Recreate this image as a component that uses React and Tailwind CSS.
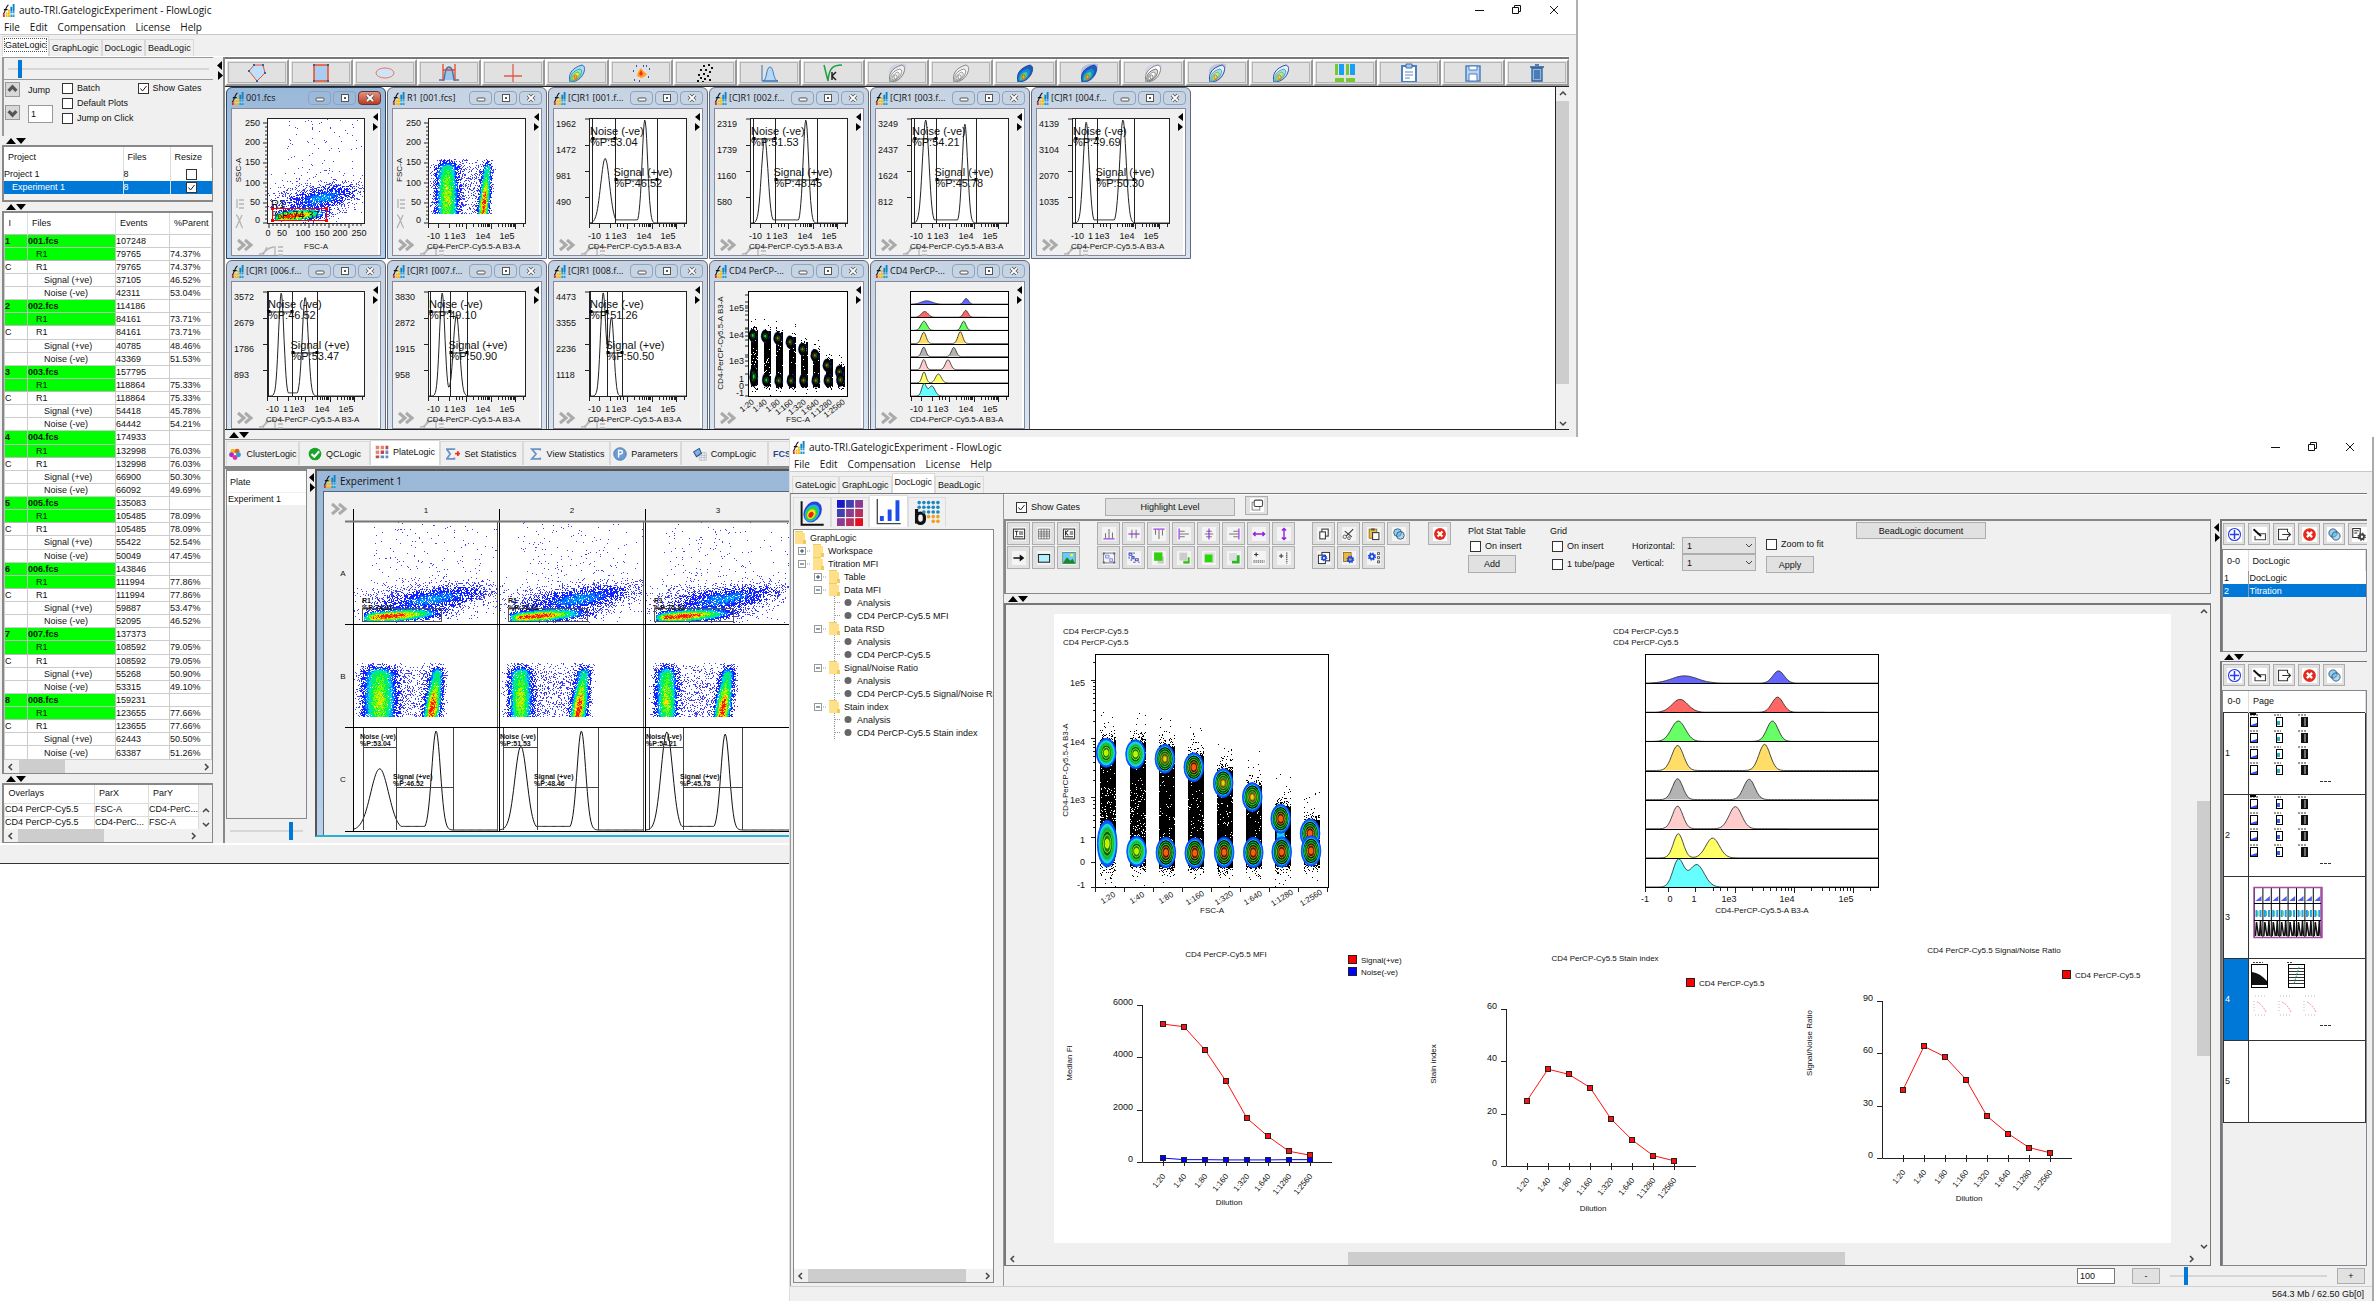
import React, { useState } from 'react';

// ---------------------------------------------------------------- data

const FILES = [
  { n: 1, name: '001.fcs', total: 107248, r1: 79765, pct: '74.37%', sig: [37105, '46.52%'], noise: [42311, '53.04%'] },
  { n: 2, name: '002.fcs', total: 114186, r1: 84161, pct: '73.71%', sig: [40785, '48.46%'], noise: [43369, '51.53%'] },
  { n: 3, name: '003.fcs', total: 157795, r1: 118864, pct: '75.33%', sig: [54418, '45.78%'], noise: [64442, '54.21%'] },
  { n: 4, name: '004.fcs', total: 174933, r1: 132998, pct: '76.03%', sig: [66900, '50.30%'], noise: [66092, '49.69%'] },
  { n: 5, name: '005.fcs', total: 135083, r1: 105485, pct: '78.09%', sig: [55422, '52.54%'], noise: [50049, '47.45%'] },
  { n: 6, name: '006.fcs', total: 143846, r1: 111994, pct: '77.86%', sig: [59887, '53.47%'], noise: [52095, '46.52%'] },
  { n: 7, name: '007.fcs', total: 137373, r1: 108592, pct: '79.05%', sig: [55268, '50.90%'], noise: [53315, '49.10%'] },
  { n: 8, name: '008.fcs', total: 159231, r1: 123655, pct: '77.66%', sig: [62443, '50.50%'], noise: [63387, '51.26%'] },
];

const DILUTIONS = ['1:20', '1:40', '1:80', '1:160', '1:320', '1:640', '1:1280', '1:2560'];

// peaks are [centre, height, sigma] in fractions of the frame
const HISTOGRAMS = {
  '001': { ticks: [1962, 1472, 981, 490], noise: '53.04', signal: '46.52', gates: [0.03, 0.27, 0.69], peaks: [[0.165, 0.62, 0.045], [0.57, 0.99, 0.028]] },
  '002': { ticks: [2319, 1739, 1160, 580], noise: '51.53', signal: '48.45', gates: [0.03, 0.26, 0.68], peaks: [[0.15, 0.82, 0.033], [0.57, 0.99, 0.028]] },
  '003': { ticks: [3249, 2437, 1624, 812], noise: '54.21', signal: '45.78', gates: [0.03, 0.26, 0.66], peaks: [[0.15, 0.99, 0.033], [0.55, 0.95, 0.028]] },
  '004': { ticks: [4139, 3104, 2070, 1035], noise: '49.69', signal: '50.30', gates: [0.03, 0.26, 0.63], peaks: [[0.145, 0.97, 0.03], [0.52, 0.99, 0.033]] },
  '006': { ticks: [3572, 2679, 1786, 893], noise: '46.52', signal: '53.47', gates: [0.01, 0.25, 0.51], peaks: [[0.145, 0.99, 0.027], [0.39, 0.95, 0.03]] },
  '007': { ticks: [3830, 2872, 1915, 958], noise: '49.10', signal: '50.90', gates: [0.02, 0.22, 0.4], peaks: [[0.145, 0.99, 0.027], [0.29, 0.78, 0.032]] },
  '008': { ticks: [4473, 3355, 2236, 1118], noise: '51.26', signal: '50.50', gates: [0.01, 0.18, 0.34], peaks: [[0.145, 0.99, 0.027], [0.23, 0.75, 0.025]] },
};

const OVERLAYS = [
  { color: '#6666ff', peaks: [[0.17, 0.25, 0.055], [0.573, 0.42, 0.024]] },
  { color: '#ff6666', peaks: [[0.15, 0.44, 0.034], [0.569, 0.52, 0.024]] },
  { color: '#66ff66', peaks: [[0.143, 0.7, 0.03], [0.547, 0.7, 0.024]] },
  { color: '#ffdd66', peaks: [[0.14, 0.86, 0.025], [0.513, 0.9, 0.024]] },
  { color: '#b3b3b3', peaks: [[0.14, 0.72, 0.022], [0.447, 0.7, 0.024]] },
  { color: '#ffcccc', peaks: [[0.14, 0.78, 0.022], [0.388, 0.76, 0.027]] },
  { color: '#ffff66', peaks: [[0.143, 0.83, 0.021], [0.29, 0.68, 0.029]] },
  { color: '#66ffff', peaks: [[0.143, 0.93, 0.023], [0.222, 0.77, 0.032]] },
];

const TREE = [
  { level: 0, label: 'GraphLogic' },
  { level: 1, label: 'Workspace', box: '+' },
  { level: 1, label: 'Titration MFI', box: '-' },
  { level: 2, label: 'Table', box: '+' },
  { level: 2, label: 'Data MFI', box: '-' },
  { level: 3, label: 'Analysis' },
  { level: 3, label: 'CD4 PerCP-Cy5.5 MFI' },
  { level: 2, label: 'Data RSD', box: '-' },
  { level: 3, label: 'Analysis' },
  { level: 3, label: 'CD4 PerCP-Cy5.5' },
  { level: 2, label: 'Signal/Noise Ratio', box: '-' },
  { level: 3, label: 'Analysis' },
  { level: 3, label: 'CD4 PerCP-Cy5.5 Signal/Noise Rat' },
  { level: 2, label: 'Stain index', box: '-' },
  { level: 3, label: 'Analysis' },
  { level: 3, label: 'CD4 PerCP-Cy5.5 Stain index' },
];

// ---------------------------------------------------------------- plot helpers

const random = (seed) => {
  let s = seed;
  return () => {
    s = (s * 1664525 + 1013904223) % 4294967296;
    return s / 4294967296;
  };
};

const gauss = (x, c, s) => Math.exp(-((x - c) * (x - c)) / (2 * s * s));

const HEAT = ['#4040ee', '#1420ff', '#0078ff', '#00d8e8', '#00f060', '#70ff00', '#ffe000', '#ff7800', '#ff1800'];
const LEVELS = [0.45, 1.5, 2.2, 3, 4.6, 6, 7.4, 8.4];

// One path per heat colour; a pixel is lit with a chance that grows with the density
const densityPaths = (w, h, density, seed) => {
  const rnd = random(seed);
  const paths = HEAT.map(() => '');
  for (let y = 0; y < h; y++) {
    for (let x = 0; x < w; x++) {
      const d = density((x + 0.5) / w, 1 - (y + 0.5) / h);
      if (rnd() > 1 - Math.exp(-d)) continue;
      const noisy = d * (0.75 + rnd() * 0.5);
      let i = 0;
      while (i < LEVELS.length && noisy > LEVELS[i]) i++;
      paths[i] += `M${x} ${y}h1v1h-1z`;
    }
  }
  return paths;
};

const sideScatter = (u, v) => {
  const along = u < 0.26 ? 0.75 + 0.25 * gauss(u, 0.26, 0.08) : gauss(u, 0.26, 0.155);
  const band = u > 0.07 && v > 0.02 ? 9.6 * gauss(v, 0.04 + 0.12 * u - 0.05 * u * u, 0.028) * along * Math.min(1, (u - 0.05) * 12) : 0;
  const cloud = 1.7 * gauss(u, 0.6, 0.19) * gauss(v, 0.13 + 0.2 * u, 0.055);
  const haze = 0.55 * gauss(u, 0.4, 0.2) * gauss(v, 0.2, 0.09);
  const far = u > 0.12 ? 0.045 * gauss(u, 0.5, 0.35) * Math.exp(-v * 0.8) * (v > 0.1 ? 1 : 0.2) : 0;
  return band + cloud + haze + far;
};

const twoBlobs = (left, leftSigma, right) => (u, v) => {
  if (v < 0.09 || v > 0.62) return 0;
  const edge = v > 0.5 ? gauss(v, 0.5, 0.05) : 1;
  const a = 5.6 * gauss(u, left, leftSigma) * edge * (0.7 + 0.3 * gauss(v, 0.26, 0.12));
  const b = 9 * gauss(u, right + 0.1 * (v - 0.2), 0.028) * edge * (0.35 + 0.65 * gauss(v, 0.17, 0.13));
  const mid = u > 0.05 && u < right + 0.08 ? 0.25 : 0;
  return a + b + mid * (v > 0.55 ? 0.5 : 1);
};

const curve = (x, y, w, h, peaks, floor = 0) => {
  let d = '';
  for (let i = 0; i <= 160; i++) {
    const u = i / 160;
    let v = peaks.reduce((sum, [c, p, s]) => sum + p * gauss(u, c, s), 0);
    if (u > peaks[0][0] && u < peaks[1][0]) v = Math.max(v, floor);
    d += `${i ? 'L' : 'M'}${(x + u * w).toFixed(1)} ${(y + h - Math.min(v, 1) * h).toFixed(1)}`;
  }
  return d;
};

const Density = ({ x, y, w, h, density, seed }) => (
  <g transform={`translate(${x} ${y})`} shapeRendering="crispEdges">
    {densityPaths(w, h, density, seed).map((d, i) => (
      <path key={i} d={d} fill={HEAT[i]} />
    ))}
  </g>
);

const T = ({ x, y, size = 9, anchor = 'start', rotate, bold, children }) => (
  <text
    x={x}
    y={y}
    fontSize={size}
    textAnchor={anchor}
    dominantBaseline="central"
    fontWeight={bold ? 700 : 400}
    transform={rotate ? `rotate(${rotate} ${x} ${y})` : undefined}
    fill="#111"
  >
    {children}
  </text>
);

const LogAxis = ({ x, y, w }) => {
  const ticks = [];
  for (let dec = 0; dec < 3; dec++) {
    for (let k = 1; k < 10; k++) {
      const t = 0.385 + (dec + Math.log10(k)) * 0.253;
      if (t < 1) ticks.push([t, k === 1 ? 5 : 3]);
    }
  }
  [[0, 4], [0.1, 4], [0.215, 4], [0.29, 3], [0.32, 3], [0.35, 3]].forEach((t) => ticks.push(t));
  return <path d={ticks.map(([t, l]) => `M${Math.round(x + t * w) + 0.5} ${y}v${l}`).join('')} stroke="#222" fill="none" />;
};

const SmallXLabels = () => (
  <>
    <LogAxis x={35} y={115} w={98} />
    <T x={34} y={127}>-10</T>
    <T x={51} y={127}>1</T>
    <T x={65} y={127} anchor="middle">1e3</T>
    <T x={90} y={127} anchor="middle">1e4</T>
    <T x={114} y={127} anchor="middle">1e5</T>
    <T x={34} y={137} size={8}>CD4-PerCP-Cy5.5-A B3-A</T>
  </>
);

const LinearTicks = () => (
  <path
    d={Array.from({ length: 26 }, (_, i) => `M35 ${114 - i * 4}h${i % 5 === 0 ? -4 : -2}`).join('')}
    stroke="#222"
    fill="none"
  />
);

const CornerMarks = ({ side }) => (
  <g stroke="#b4b4b4" fill="none" strokeWidth="1.3">
    <path d="M27 145c8 0 5-6 15-7M35 138l-4 8M43 137v9M46 138h5M46 142h5M46 146h5" />
    {side && <path d="M4 106c3 0 5 13 7 13M10 106l-6 13M5 90v9M7 91h5M7 95h5M7 99h5" />}
  </g>
);

const Chevrons = ({ x, y }) => (
  <path d={`M${x} ${y}l6 5-6 5M${x + 7} ${y}l6 5-6 5`} fill="none" stroke="#aaa" strokeWidth="3" />
);

// ---------------------------------------------------------------- plots

const ScatterPlot = () => (
  <>
    <CornerMarks side />
    <rect x="35.5" y="9.5" width="97" height="105" fill="#fff" stroke="#222" />
    <LinearTicks />
    <Density x={36} y={10} w={96} h={104} density={sideScatter} seed={7} />
    {[250, 200, 150, 100, 50, 0].map((v, i) => (
      <T key={v} x={28} y={[14, 33, 53, 74, 93, 111][i]} anchor="end">{v}</T>
    ))}
    {[0, 50, 100, 150, 200, 250].map((v, i) => (
      <T key={v} x={[36, 50, 71, 90, 108, 127][i]} y={124} anchor="middle">{v}</T>
    ))}
    <path d={Array.from({ length: 24 }, (_, i) => `M${37 + i * 4} 115v${i % 5 === 0 ? 4 : 2}`).join('')} stroke="#222" />
    <T x={84} y={137} size={8} anchor="middle">FSC-A</T>
    <T x={6} y={61} size={8} anchor="middle" rotate={-90}>SSC-A</T>
    <rect x="40.500" y="99.500" width="54" height="12" fill="none" stroke="#f00" />
    <path d="M39 98h3v3h-3zM93 98h3v3h-3zM39 110h3v3h-3zM93 110h3v3h-3z" fill="#f00" />
    <T x={39} y={95} size={11}>R1</T>
    <T x={40} y={106} size={11}>%P:74.37</T>
  </>
);

const GatedPlot = () => (
  <>
    <CornerMarks side />
    <rect x="35.5" y="9.5" width="97" height="105" fill="#fff" stroke="#222" />
    <LinearTicks />
    <Density x={36} y={10} w={96} h={104} density={twoBlobs(0.19, 0.06, 0.575)} seed={21} />
    {[250, 200, 150, 100, 50, 0].map((v, i) => (
      <T key={v} x={28} y={[14, 33, 53, 74, 93, 111][i]} anchor="end">{v}</T>
    ))}
    <T x={6} y={61} size={8} anchor="middle" rotate={-90}>FSC-A</T>
    <SmallXLabels />
  </>
);

const HistogramPlot = ({ id }) => {
  const { ticks, noise, signal, gates, peaks } = HISTOGRAMS[id];
  const [a, b, c] = gates.map((g) => Math.round(35 + g * 98) + 0.5);
  return (
    <>
      <CornerMarks />
      <rect x="35.5" y="9.5" width="97" height="105" fill="#fff" stroke="#222" />
      {ticks.map((v, i) => (
        <React.Fragment key={v}>
          <T x={2} y={[15, 41, 67, 93][i]}>{v}</T>
          <path d={`M31 ${[10, 36.5, 62.5, 88.5][i]}h4`} stroke="#222" />
        </React.Fragment>
      ))}
      <path d={curve(35, 10, 98, 104, peaks, 0.03)} fill="none" stroke="#222" />
      <path d={`M${a} 10V114M${b} 10V114M${c} 10V114M${a} 30H${b}M${b} 71H${c}`} stroke="#222" fill="none" />
      <path d={`M${b - 1} 69h3v3h-3zM${c - 2} 69h3v3h-3zM${a - 1} 28h3v3h-3zM${b - 2} 28h3v3h-3z`} />
      <T x={36} y={22} size={11}>Noise (-ve)</T>
      <T x={36} y={33} size={11}>%P:{noise}</T>
      <T x={b - 2} y={63} size={11}>Signal (+ve)</T>
      <T x={b - 1} y={74} size={11}>%P:{signal}</T>
      <SmallXLabels />
    </>
  );
};

const COLUMN_X = [0.048, 0.174, 0.3, 0.424, 0.55, 0.675, 0.797, 0.923];
const COLUMN_TOP = [0.424, 0.43, 0.45, 0.486, 0.554, 0.614, 0.707, 0.77];
const COLUMN_LOW = [0.814, 0.847, 0.852, 0.854, 0.851, 0.852, 0.85, 0.845];

const Blob = ({ cx, cy, rx, ry, hot, detail }) => {
  const rings = detail
    ? [[1, '#0a5aff', '#0a46ff'], [0.84, hot > 0 ? '#000' : '#10d8d0', '#10e0f0'], [0.7, hot > 0 ? '#041' : '#18b050', '#20d040'], [0.54, hot > 1 ? '#221c00' : '#0c5c10', '#40e020'], [0.38, hot > 1 ? '#3a2400' : '#187818', hot > 0 ? '#e08010' : '#80ff10'], [0.2, hot > 1 ? '#ff5a10' : '#c0f000', hot > 0 ? '#ff6010' : '#d0ff00']]
    : [[1, '#000', '#0a46ff'], [0.5, '#063008', '#10803a'], [0.22, hot > 0 ? '#e04a10' : '#20d040', 'none']];
  return rings.map(([k, fill, stroke], i) => (
    <ellipse key={i} cx={cx} cy={cy} rx={rx * k} ry={ry * k} fill={fill} stroke={stroke} strokeWidth={detail ? 0.9 : 0.5} strokeDasharray={detail ? undefined : '3 4'} />
  ));
};

const TitrationDots = ({ x, y, w, h, detail }) => {
  const rnd = random(91);
  let d = '';
  const half = w * 0.034;
  COLUMN_X.forEach((cx, i) => {
    const top = COLUMN_TOP[i] - 0.05;
    const low = COLUMN_LOW[i] + 0.055;
    for (let py = 0; py < h; py++) {
      const v = py / h;
      let p = v > top && v < low ? (v > top + 0.2 && i < 2 ? 0.88 : 0.96) : 0;
      if (v <= top) p = 0.75 * Math.exp((v - top) / 0.02) + (v > top - 0.13 ? 0.02 : 0);
      if (v >= low) p = 0.9 * Math.exp((low - v) / (i === 0 ? 0.035 : 0.015));
      for (let px = -half; px < half; px++) {
        if (rnd() < p) d += `M${Math.round(x + cx * w + px + 2)} ${Math.round(y + py)}h1v1h-1z`;
      }
    }
  });
  return (
    <>
      <path d={d} fill="#000" shapeRendering="crispEdges" />
      {COLUMN_X.map((cx, i) => (
        <g key={i}>
          {i === 6 && detail && <rect x={x + cx * w - 4} y={y + 0.74 * h} width="8" height="18" fill="#10d0ff" />}
          <Blob cx={x + cx * w} cy={y + COLUMN_TOP[i] * h} rx={w * 0.042} ry={h * 0.062} hot={i < 2 ? 0 : i === 3 || i > 5 ? 2 : 1} detail={detail} />
          <Blob cx={x + cx * w + 1} cy={y + COLUMN_LOW[i] * h} rx={w * 0.042} ry={h * (i === 0 ? 0.1 : 0.065)} hot={i < 2 ? 0 : 2} detail={detail} />
        </g>
      ))}
      <rect x={x + 0.5} y={y + 0.5} width={w} height={h} fill="none" stroke="#000" />
    </>
  );
};

const StackedHistograms = ({ x, y, w, h }) => {
  const step = h / 8;
  return (
    <>
      <rect x={x + 0.5} y={y + 0.5} width={w} height={h} fill="#fff" stroke="#000" />
      {OVERLAYS.map(({ color, peaks }, i) => (
        <g key={color}>
          <path d={curve(x, y + i * step, w, step, peaks)} fill={color} stroke="#222" strokeWidth="0.8" />
          <path d={`M${x} ${Math.round(y + (i + 1) * step) + 0.5}h${w}`} stroke="#000" />
        </g>
      ))}
    </>
  );
};

const SmallTitration = () => (
  <>
    <rect x="33.5" y="9.5" width="99" height="105" fill="#fff" />
    <TitrationDots x={33} y={9} w={99} h={105} />
    {['1e5', '1e4', '1e3', '1', '0', '-1'].map((v, i) => (
      <T key={v} x={29} y={[26, 53, 79, 97, 104, 111][i]} anchor="end">{v}</T>
    ))}
    <path d={[13, 20, 24, 26, 29, 33, 38, 46, 47, 50, 54, 58, 64, 73, 75, 79, 84, 92, 103, 114].map((v) => `M33 ${v}h-3`).join('')} stroke="#222" />
    {DILUTIONS.map((v, i) => (
      <T key={v} x={38 + i * 13} y={119} size={8} anchor="end" rotate={-38}>{v}</T>
    ))}
    <T x={5} y={61} size={8} anchor="middle" rotate={-90}>CD4-PerCP-Cy5.5-A B3-A</T>
    <T x={83} y={137} size={8} anchor="middle">FSC-A</T>
  </>
);

const SmallStack = () => (
  <>
    <StackedHistograms x={34} y={9} w={98} h={105} />
    <SmallXLabels />
  </>
);

const LineChart = ({ w, title, titleX, titleY, yLabel, labelY, ticks, top, series, legend, axisX, shift }) => {
  const bottom = top + 157;
  const max = ticks[0];
  return (
    <svg width={w} height="290" className="block overflow-visible">
      <T x={titleX} y={titleY} size={8} anchor="middle">{title}</T>
      {legend.map(([lx, ly, color, label]) => (
        <g key={label}>
          <rect x={lx + 0.5} y={ly - 4.5} width="8" height="8" fill={color} stroke="#222" />
          <T x={lx + 13} y={ly} size={8}>{label}</T>
        </g>
      ))}
      <T x={axisX - 73} y={labelY} size={8} anchor="middle" rotate={-90}>{yLabel}</T>
      <path d={`M${axisX}.5 ${top}V${bottom}.5H${axisX + 190}`} fill="none" stroke="#222" />
      {ticks.map((v, i) => {
        const ty = Math.round(top + (157 * i) / (ticks.length - 1));
        return (
          <g key={v}>
            <path d={`M${axisX - 5} ${ty}.5h5`} stroke="#222" />
            <T x={axisX - 9} y={ty - 3} size={9} anchor="end">{v}</T>
          </g>
        );
      })}
      {DILUTIONS.map((v, i) => (
        <g key={v}>
          <path d={`M${axisX + 21 + i * 21}.5 ${bottom - 3}v7`} stroke="#222" />
          <T x={axisX + 22 + i * 21} y={bottom + 13} size={8} anchor="end" rotate={-50}>{v}</T>
        </g>
      ))}
      {series.map(({ color, values }) => (
        <g key={color}>
          <polyline
            points={values.map((v, i) => `${axisX + 21 + i * 21},${bottom - (v / max) * 157}`).join(' ')}
            fill="none"
            stroke={color}
          />
          {values.map((v, i) => (
            <rect key={i} x={axisX + 18.5 + i * 21} y={Math.round(bottom - (v / max) * 157) - 2.5} width="5" height="5" fill={color} stroke="#222" />
          ))}
        </g>
      ))}
      <T x={axisX + 87} y={bottom + shift} size={8} anchor="middle">Dilution</T>
    </svg>
  );
};

const DocTitration = () => (
  <svg width="290" height="300" className="block overflow-visible">
    <T x={9} y={17} size={8}>CD4 PerCP-Cy5.5</T>
    <T x={9} y={28} size={8}>CD4 PerCP-Cy5.5</T>
    <TitrationDots x={41} y={40} w={233} h={233} detail />
    {['1e5', '1e4', '1e3', '1', '0', '-1'].map((v, i) => (
      <T key={v} x={31} y={[69, 128, 186, 226, 248, 271][i]} anchor="end">{v}</T>
    ))}
    <path
      d={[48, 68, 66, 72, 75, 79, 84, 89, 96, 107, 124, 127, 130, 133, 137, 142, 148, 156, 166, 183, 186, 190, 194, 201, 206, 213, 223, 248, 273]
        .map((v) => `M41 ${v}.5h-${[66, 124, 183, 223, 248, 273].includes(v) ? 4 : 2}`)
        .join('')}
      stroke="#222"
    />
    <path d={Array.from({ length: 9 }, (_, i) => `M${41 + i * 29}.5 273v5`).join('')} stroke="#222" />
    {DILUTIONS.map((v, i) => (
      <T key={v} x={54 + i * 29} y={284} size={8} anchor="middle" rotate={-32}>{v}</T>
    ))}
    <T x={11} y={156} size={8} anchor="middle" rotate={-90}>CD4-PerCP-Cy5.5-A B3-A</T>
    <T x={158} y={296} size={8} anchor="middle">FSC-A</T>
  </svg>
);

const DocStack = () => (
  <svg width="290" height="300" className="block overflow-visible">
    <T x={9} y={17} size={8}>CD4 PerCP-Cy5.5</T>
    <T x={9} y={28} size={8}>CD4 PerCP-Cy5.5</T>
    <StackedHistograms x={41} y={40} w={233} h={233} />
    <LogAxis x={41} y={274} w={233} />
    {['-1', '0', '1', '1e3', '1e4', '1e5'].map((v, i) => (
      <T key={v} x={[41, 66, 90, 125, 183, 242][i]} y={285} anchor="middle">{v}</T>
    ))}
    <T x={158} y={296} size={8} anchor="middle">CD4-PerCP-Cy5.5-A B3-A</T>
  </svg>
);

// ---------------------------------------------------------------- plate view

const PLATE_COLUMNS = [
  { pct: '74.37', noise: '53.04', signal: '46.52', left: 0.18, sigma: 0.06, right: 0.55, gates: [10, 43, 100], peaks: [[0.178, 0.6, 0.062], [0.57, 0.97, 0.03]] },
  { pct: '73.71', noise: '51.53', signal: '48.46', left: 0.145, sigma: 0.042, right: 0.555, gates: [4, 38, 99], peaks: [[0.145, 0.82, 0.042], [0.565, 0.97, 0.03]] },
  { pct: '75.33', noise: '54.21', signal: '45.78', left: 0.145, sigma: 0.038, right: 0.54, gates: [4, 38, 97], peaks: [[0.145, 0.96, 0.04], [0.55, 0.94, 0.03]] },
];

const PlateGrid = () => (
  <svg width="470" height="342" className="block">
    <Chevrons x={8} y={12} />
    <rect x="29" y="29" width="441" height="310" fill="#fff" />
    {PLATE_COLUMNS.map((col, i) => {
      const x = 29 + i * 146;
      const [a, b, c] = col.gates;
      return (
        <g key={col.pct}>
          <T x={x + 73} y={18} size={8} anchor="middle">{i + 1}</T>
          <Density x={x + 1} y={30} w={143} h={101} density={sideScatter} seed={33 + i} />
          <rect x={x + 9.5} y="116.500" width="79" height="13" fill="none" stroke="#555" />
          <T x={x + 9} y={108} size={7} bold>R1</T>
          <T x={x + 9} y={115} size={7} bold>%P:{col.pct}</T>
          <Density x={x + 1} y={133} w={143} h={101} density={twoBlobs(col.left, col.sigma, col.right)} seed={57 + i} />
          <path d={curve(x + 1, 236, 144, 102, col.peaks, 0.035)} fill="none" stroke="#111" />
          <path d={`M${x + a}.5 236v102M${x + b}.5 236v102M${x + c}.5 236v102M${x + a} 255.500H${x + b}M${x + b} 295.500H${x + c}`} stroke="#444" fill="none" />
          <T x={x + a - 3} y={244} size={7} bold>Noise (-ve)</T>
          <T x={x + a - 3} y={251} size={7} bold>%P:{col.noise}</T>
          <T x={x + b - 3} y={284} size={7} bold>Signal (+ve)</T>
          <T x={x + b - 3} y={291} size={7} bold>%P:{col.signal}</T>
          <path d={`M${x}.5 17V339`} stroke="#000" />
          <path d={`M${x + 144}.5 29V339`} stroke="#555" />
        </g>
      );
    })}
    {['A', 'B', 'C'].map((r, i) => (
      <T key={r} x={19} y={81 + i * 103} size={8} anchor="middle">{r}</T>
    ))}
    <path d="M21 29.500H470" stroke="#777" strokeWidth="2" />
    <path d="M21 132.500H470M21 235.500H470M21 339.500H470" stroke="#000" />
  </svg>
);

// ---------------------------------------------------------------- icons

const Logo = ({ className = 'size-[13px] shrink-0' }) => (
  <svg viewBox="0 0 14 14" className={className}>
    <path d="M1 11c2 0 3-9 6-10M2 6h4" stroke="#111" strokeWidth="1.2" fill="none" />
    <path d="M4 9h2v5H4zM6.500 6h2v8h-2z" fill="#f5b800" />
    <path d="M1 11h2v3H1z" fill="#e03020" />
    <path d="M9 3h2v7H9zM11.500 0h2v10h-2z" fill="#0a85c8" />
    <path d="M9 11h2v3H9zM11.500 11h2v3h-2z" fill="#1a9ad8" />
    <path d="M4 8.500h10M4 11.500h10" stroke="#fff" strokeWidth=".5" />
  </svg>
);

const Ico = ({ children, className = 'size-5' }) => (
  <svg viewBox="0 0 20 20" className={className} fill="none">
    {children}
  </svg>
);

const contour = (tones, dots) => (
  <>
    {dots && <path d="M2 9c0-7 8-9 17-8 0 7-3 15-10 18-6 0-7-4-7-10z" fill={dots} opacity=".5" />}
    <path d="M3 19c-2-7 1-14 12-17 3 1 3 4 2 7-2 6-7 10-14 10z" fill={tones[0][0]} stroke={tones[0][1]} />
    <path d="M4 18c-1-5 1-10 9-12 2 1 2 3 1 5-1 4-5 7-10 7z" fill={tones[1][0]} stroke={tones[1][1]} strokeWidth=".8" />
    <path d="M5 17c0-4 2-7 6-8 2 1 1 2 1 4-1 3-4 4-7 4z" fill={tones[2][0]} stroke={tones[2][1]} strokeWidth=".8" />
    <ellipse cx="8.500" cy="14" rx="1.600" ry="2" fill={tones[3][0]} stroke={tones[3][1]} strokeWidth=".8" />
  </>
);

const GRAY = [['#eee', '#888'], ['#fff', '#777'], ['#eee', '#888'], ['#fff', '#777']];
const BLUE = [['#1c5cc0', '#1c4c9c'], ['#1a8ad0', '#1a8ad0'], ['#40d090', '#30c0a0'], ['#ffb000', '#f04020']];
const OPEN = [['#e8eef8', '#3050a0'], ['#a8e0f0', '#3090c0'], ['#b0f0a0', '#50c050'], ['#ffd050', '#f05020']];

const GATE_TOOLS = [
  ['Polygon gate', <><path d="M2 8l5-6h9l2 8-8 8z" fill="#bfe0fa" stroke="#e8503a" /><path d="M1 7h2v2H1zM6 1h2v2H6zM15 1h2v2h-2zM17 9h2v2h-2zM9 17h2v2H9z" fill="#3060a0" /></>],
  ['Rectangle gate', <><rect x="3" y="2" width="14" height="16" fill="#a9cdf2" stroke="#f04a20" strokeWidth="1.500" /><path d="M2 1h2v2H2zM16 1h2v2h-2zM2 17h2v2H2zM16 17h2v2h-2z" fill="#3060a0" /></>],
  ['Ellipse gate', <ellipse cx="10" cy="10" rx="9" ry="5" fill="#cfe4f6" stroke="#f07060" />],
  ['Interval gate', <><path d="M0 17h5c1-9 2-13 5-13s4 4 5 13h5" fill="#9cc6ee" stroke="#3a78b8" strokeWidth="1.400" /><path d="M4 1v17M16 1v17M4 7h12" stroke="#e04a30" strokeWidth="1.300" /></>],
  ['Quadrant gate', <path d="M10 1v18M1 13h18" stroke="#e05a4a" strokeWidth="1.300" />],
  ['Contour plot', contour([['#a9d8f4', '#2c70b8'], ['#8ce8d0', '#2c9c80'], ['#d8f060', '#60b030'], ['#ffa040', '#e05010']])],
  ['Heat dots', <><path d="M5 2h1v2H5zM15 2h1v2h-1zM18 5h1v2h-1zM2 7h1v2H2zM3 16h1v2H3zM8 17h1v2H8zM17 13h1v2h-1zM12 2h1v2h-1z" fill="#3050c0" /><path d="M10 5l3 4 3 2-3 3-3 1-4-2 1-4z" fill="#ffa020" /><path d="M10 7l2 4-2 2-2-2z" fill="#f03020" /></>],
  ['Dot plot', <path d="M8 2h2v2H8zM13 1h2v2h-2zM16 4h2v2h-2zM5 6h2v2H5zM10 6h2v2h-2zM14 8h2v2h-2zM3 11h2v2H3zM8 10h2v2H8zM12 12h2v2h-2zM5 14h2v2H5zM9 15h2v2H9zM2 17h2v2H2zM14 16h2v2h-2zM7 18h2v2H7z" fill="#111" />],
  ['Histogram', <><path d="M4 18c4 0 3-14 7-14s3 14 8 14z" fill="#b4d8f6" stroke="#3a80c8" /><path d="M3 2v16h16" stroke="#3a6ea8" /></>],
  ['Kinetics', <><path d="M1 2l4 16c1-12 4-16 14-16" stroke="#20a040" strokeWidth="1.500" /><path d="M9 9v8M13 9l-4 4 4 4" stroke="#222" strokeWidth="1.500" /></>],
  ['Contour with outliers', contour(GRAY, '#b8c4e0')],
  ['Contour outline', contour(GRAY)],
  ['Filled contour', contour(BLUE)],
  ['Filled contour with outliers', contour(BLUE, '#8c98e8')],
  ['Zebra', contour([['#fff', '#888'], ['#ddd', '#555'], ['#fff', '#777'], ['#eee', '#666']], '#c8ccf0')],
  ['Colour contour with outliers', contour(OPEN, '#98a8e0')],
  ['Colour contour', contour(OPEN)],
  ['Tile windows', <><path d="M4 1h5v11H4zM15 1h5v11h-5z" fill="#18a0f8" /><path d="M0 1h3v11H0zM11 1h3v11h-3zM0 15h9v4H0zM11 15h9v4h-9z" fill="#78c830" /></>],
  ['Clipboard', <><rect x="3" y="3" width="14" height="16" fill="#fff" stroke="#4a80c0" strokeWidth="2" /><path d="M7 1h6v4H7z" fill="#a8c8ec" stroke="#3a6ea8" /><path d="M6 9h8M6 12h8M6 15h5" stroke="#5a8ac0" /></>],
  ['Save', <><path d="M3 3h14v15H3z" fill="#b8d4f2" stroke="#4a80c0" strokeWidth="1.500" /><path d="M6 3h8v4H6zM6 11h8v7H6z" fill="#fff" stroke="#4a80c0" /></>],
  ['Delete', <><path d="M5 5h10v13H5z" fill="#8cb8e4" stroke="#2a5c98" strokeWidth="1.300" /><path d="M3 4h14M8 2h4M8 7v9M10 7v9M12 7v9" stroke="#2a5c98" strokeWidth="1.300" /></>],
];

const P = '#9020e0';
const gear = (cx, cy, r, c) => (
  <>
    <circle cx={cx} cy={cy} r={r} stroke={c} strokeWidth={r * 0.8} />
    <circle cx={cx} cy={cy} r={r * 1.5} stroke={c} strokeWidth={r * 0.7} strokeDasharray={`${r * 0.6} ${r * 0.58}`} />
  </>
);
const page = (x, y, w, h, fill = '#fff') => <rect x={x} y={y} width={w} height={h} fill={fill} stroke="#333" strokeWidth="1.500" />;
const rings = <><circle cx="8" cy="8" r="5.500" fill="#90d0f0" stroke="#235" /><circle cx="12" cy="12" r="5.500" fill="#60b8e8" fillOpacity=".5" stroke="#235" /></>;
const cross = <><circle cx="10" cy="10" r="8.500" fill="#e8281c" /><path d="M6.500 6.500l7 7M13.500 6.500l-7 7" stroke="#fff" strokeWidth="3" /></>;

const DOC_TOOLS = [
  [
    ['Text', <>{page(2, 3, 16, 14)}<path d="M4 6h5M6.500 6v6M10 7h6M10 10h6M4 14h12" stroke="#333" strokeWidth="1.500" /></>],
    ['Grid', <path d="M2 3h16v14H2zM2 7h16M2 10h16M2 13h16M6 3v14M10 3v14M14 3v14" stroke="#555" />],
    ['Key', <>{page(2, 3, 16, 14)}<path d="M5 5v7M9 5l-4 3 4 4M11 7h5M11 10h5M4 14h12" stroke="#333" strokeWidth="1.500" /></>],
  ],
  [
    ['Align bottom', <><path d="M5 9v7M10 3v13M15 8v8" stroke="#777" strokeWidth="1.500" /><path d="M2 17h16" stroke={P} strokeWidth="1.500" /></>],
    ['Align middle', <><path d="M7 4v12M13 4v12" stroke="#777" strokeWidth="1.500" /><path d="M2 10h16" stroke={P} strokeWidth="1.500" /></>],
    ['Align top', <><path d="M5 4v7M10 4v13M15 4v8" stroke="#777" strokeWidth="1.500" /><path d="M2 3h16" stroke={P} strokeWidth="1.500" /></>],
    ['Align left', <><path d="M4 6h7M4 10h13M4 14h7" stroke="#777" strokeWidth="1.500" /><path d="M3 2v16" stroke={P} strokeWidth="1.500" /></>],
    ['Align center', <><path d="M6 6h8M4 10h12M6 14h8" stroke="#777" strokeWidth="1.500" /><path d="M10 2v16" stroke={P} strokeWidth="1.500" /></>],
    ['Align right', <><path d="M9 6h7M3 10h13M9 14h7" stroke="#777" strokeWidth="1.500" /><path d="M17 2v16" stroke={P} strokeWidth="1.500" /></>],
    ['Same width', <path d="M2 10h16M5 7l-3 3 3 3M15 7l3 3-3 3" stroke={P} strokeWidth="2" />],
    ['Same height', <path d="M10 2v16M7 5l3-3 3 3M7 15l3 3 3-3" stroke={P} strokeWidth="2" />],
  ],
  [
    ['Copy', <>{page(7, 3, 9, 10)}{page(4, 7, 8, 10)}</>],
    ['Cut', <><path d="M16 3L6 13M4 6l10 8" stroke="#333" strokeWidth="1.500" /><circle cx="4" cy="14" r="2.500" stroke="#333" /><circle cx="10" cy="16" r="2" stroke="#333" /></>],
    ['Paste', <><rect x="3" y="3" width="11" height="13" fill="#e8b840" stroke="#7a5c10" /><path d="M6 2h5v3H6z" fill="#555" />{page(8, 8, 9, 10)}</>],
    ['Duplicate', rings],
  ],
];

const DOC_TOOLS_LOWER = [
  [
    ['Line', <path d="M2 10h13M12 7l4 3-4 3z" stroke="#111" strokeWidth="2" fill="#111" />],
    ['Rectangle', <rect x="2" y="5" width="16" height="11" fill="#b0f0ff" stroke="#222" strokeWidth="1.500" />],
    ['Image', <><rect x="1" y="2" width="18" height="16" fill="#70c8f8" stroke="#386" /><path d="M1 18l6-9 5 5 3-3 4 7z" fill="#208828" /><circle cx="14" cy="6" r="2" fill="#ff0" /></>],
  ],
  [
    ['Group', <><path d="M2 3h16v14H2z" stroke="#444" /><path d="M5 6h5v4H5zM11 11h4v4h-4z" stroke="#6070e0" fill="#e0e4ff" /><path d="M1 2h3v3H1zM16 2h3v3h-3zM1 15h3v3H1zM16 15h3v3h-3z" fill="#667" /></>],
    ['Ungroup', <path d="M3 3h4v3H3zM9 3h2M3 8v3M7 8h3v3H7zM12 11h4v3h-4zM9 16h3M16 16h2M5 13h2" stroke="#4050c0" strokeWidth="1.500" />],
    ['To front', <><path d="M8 8h9v10H8z" fill="#ccc" /><path d="M3 2h12v12H3z" fill="#30d010" /></>],
    ['To back', <><path d="M9 9h9v9H9z" fill="#30c010" /><path d="M3 2h12v12H3z" fill="#ccc" stroke="#eee" /></>],
    ['Forward', <><path d="M3 2h15v15H3z" fill="#ddd" /><path d="M4 5h11v11H4z" fill="#28d808" /></>],
    ['Backward', <><path d="M9 6h9v12H7v-4z" fill="#28b820" /><path d="M3 3h11v11H3z" fill="#ddd" /></>],
    ['Horizontal guide', <><path d="M3 5h6M6 2v6" stroke="#333" strokeWidth="1.500" /><path d="M2 14h16M2 16h16" stroke="#333" strokeDasharray="2 1" /></>],
    ['Vertical guide', <><path d="M3 7h6M6 4v6" stroke="#333" strokeWidth="1.500" /><path d="M14 2v16" stroke="#333" strokeWidth="1.500" strokeDasharray="2 1" /></>],
  ],
  [
    ['Copy settings', <>{page(7, 2, 11, 12)}{page(2, 6, 10, 12)}{gear(10, 10, 2.6, '#1c48e0')}</>],
    ['Paste settings', <><rect x="2" y="2" width="11" height="13" fill="#e8b840" stroke="#7a5c10" />{gear(12, 12, 3, '#1c48e0')}</>],
    ['Apply to all', <>{gear(7, 8, 3.2, '#1c48e0')}<path d="M15 2h3v3h-3zM15 8h3v3h-3zM15 14h3v3h-3z" stroke="#222" /></>],
  ],
];

const SIDE_TOOLS = [
  ['Add', <><circle cx="10" cy="10" r="8" stroke="#2a3cf0" strokeWidth="1.500" /><path d="M10 4v12M4 10h12" stroke="#2a3cf0" strokeWidth="2" /></>],
  ['Rename', <><path d="M7 9h11v8H4v-5" stroke="#444" strokeWidth="1.500" /><path d="M2 3l10 9" stroke="#111" strokeWidth="2.500" /></>],
  ['Export', <><path d="M14 7V3H2v14h12v-4" stroke="#333" strokeWidth="1.500" /><path d="M7 10h11M15 7l3 3-3 3" stroke="#333" strokeWidth="1.500" /></>],
  ['Delete', cross],
  ['Duplicate', rings],
  ['Settings', <><path d="M1 2h10v12H1zM3 5h6M3 8h4" stroke="#333" strokeWidth="1.500" />{gear(13, 13, 3, '#444')}</>],
];

// ---------------------------------------------------------------- controls

const CheckBox = ({ label, checked = false, hideLabel }) => {
  const [on, setOn] = useState(checked);
  return (
    <label className="flex items-center gap-1 whitespace-nowrap">
      <span className="relative block size-[11px] shrink-0">
        <input
          type="checkbox"
          checked={on}
          onChange={() => setOn(!on)}
          aria-label={hideLabel ? label : undefined}
          className="peer block size-[11px] appearance-none border border-[#333] bg-white"
        />
        <svg viewBox="0 0 11 11" className="pointer-events-none absolute inset-0 hidden peer-checked:block" fill="none">
          <path d="M2.500 5.500l2 2.500 4-5" stroke="#222" />
        </svg>
      </span>
      {!hideLabel && label}
    </label>
  );
};

const Slider = ({ label, value }) => (
  <input
    type="range"
    defaultValue={value}
    aria-label={label}
    className="block h-[18px] w-full appearance-none bg-transparent [&::-webkit-slider-runnable-track]:h-[2px] [&::-webkit-slider-runnable-track]:bg-[#d6d6d6] [&::-webkit-slider-thumb]:-mt-2 [&::-webkit-slider-thumb]:h-[18px] [&::-webkit-slider-thumb]:w-1 [&::-webkit-slider-thumb]:appearance-none [&::-webkit-slider-thumb]:bg-[#0078d7]"
  />
);

const Push = ({ children, className = '', ...rest }) => (
  <button type="button" className={`flex items-center justify-center border border-[#adadad] bg-[#e1e1e1] ${className}`} {...rest}>
    {children}
  </button>
);

const ARROWS = {
  left: 'M6 2L3 5l3 3',
  right: 'M4 2l3 3-3 3',
  up: 'M2 6l3-3 3 3',
  down: 'M2 4l3 3 3-3',
};

const Arrow = ({ dir }) => (
  <button type="button" aria-label={`Scroll ${dir}`} className="flex size-[13px] shrink-0 items-center justify-center">
    <svg viewBox="0 0 10 10" className="size-[10px]" fill="none">
      <path d={ARROWS[dir]} stroke="#444" strokeWidth="1.500" />
    </svg>
  </button>
);

const HScroll = ({ before, size, after }) => (
  <div className="flex h-[13px] shrink-0 items-stretch bg-[#f0f0f0]">
    <Arrow dir="left" />
    <span style={{ flexGrow: before }} />
    <span className="bg-[#cdcdcd]" style={{ flexGrow: size }} />
    <span style={{ flexGrow: after }} />
    <Arrow dir="right" />
  </div>
);

const VScroll = ({ before, size, after }) => (
  <div className="flex w-[13px] shrink-0 flex-col bg-[#f0f0f0]">
    <Arrow dir="up" />
    <span style={{ flexGrow: before }} />
    <span className="bg-[#cdcdcd]" style={{ flexGrow: size }} />
    <span style={{ flexGrow: after }} />
    <Arrow dir="down" />
  </div>
);

const SplitH = () => (
  <div className="flex h-[9px] shrink-0 items-center bg-[#f0f0f0] px-1">
    <svg width="20" height="6" viewBox="0 0 20 6">
      <path d="M0 6l5-6 5 6zM10 0h10l-5 6z" />
    </svg>
  </div>
);

const SplitV = ({ className }) => (
  <div className={`flex shrink-0 justify-end bg-[#f0f0f0] pt-1 ${className}`}>
    <svg width="6" height="20" viewBox="0 0 6 20">
      <path d="M5 0v9L0 4.500zM1 10v9l5-4.500z" />
    </svg>
  </div>
);

const WindowChrome = ({ active, children }) => (
  <>
    <header className="flex h-[20px] shrink-0 items-center bg-white pl-[2px] font-['Open_Sans',sans-serif] text-[10px]">
      <Logo />
      <h1 className="flex-1 whitespace-nowrap pl-1">auto-TRI.GatelogicExperiment - FlowLogic</h1>
      <button type="button" aria-label="Minimize" className="flex w-[37px] justify-center">
        <svg width="10" height="10"><path d="M0 5.500h9" stroke="#111" /></svg>
      </button>
      <button type="button" aria-label="Restore" className="flex w-[37px] justify-center">
        <svg width="10" height="10" fill="none"><path d="M.5 2.500h6v6h-6zM2.500 2V.5h6v6H7" stroke="#111" /></svg>
      </button>
      <button type="button" aria-label="Close" className="mr-1 flex w-[37px] justify-center">
        <svg width="10" height="10"><path d="M1 1l8 8M9 1L1 9" stroke="#111" /></svg>
      </button>
    </header>
    <nav className="flex h-[15px] shrink-0 items-center gap-[10px] border-b border-[#c8c8c8] bg-white px-1 font-['Open_Sans',sans-serif] text-[10px]">
      {['File', 'Edit', 'Compensation', 'License', 'Help'].map((m) => (
        <button key={m} type="button">{m}</button>
      ))}
    </nav>
    <div className="flex h-[21px] shrink-0 items-end bg-[#f0f0f0] pl-[2px]" role="tablist">
      {['GateLogic', 'GraphLogic', 'DocLogic', 'BeadLogic'].map((t) => (
        <button
          key={t}
          type="button"
          role="tab"
          aria-selected={t === active}
          className={
            t === active
              ? 'h-[20px] border border-b-0 border-[#d9d9d9] bg-white px-[2px] pb-1'
              : 'h-[17px] border border-b-0 border-[#d9d9d9] bg-[#f0f0f0] px-[2px]'
          }
        >
          <span className={t === active && t === 'GateLogic' ? 'block outline outline-1 outline-dotted outline-[#555]' : 'block'}>{t}</span>
        </button>
      ))}
    </div>
    {children}
  </>
);

// ---------------------------------------------------------------- GateLogic window

const MiniWindow = ({ title, active, children }) => (
  <section
    className={
      active
        ? 'flex h-[172px] w-[160px] shrink-0 flex-col rounded-t-md border border-[#246] bg-gradient-to-b from-[#9ab8d8] to-[#b9d1ea] px-[4px] pb-[2px]'
        : 'flex h-[172px] w-[160px] shrink-0 flex-col rounded-t-md border border-[#667] bg-gradient-to-b from-[#c6d3e3] to-[#d7e4f2] px-[4px] pb-[2px]'
    }
  >
    <header className="flex h-[20px] shrink-0 items-center gap-[2px]">
      <Logo />
      <h2 className="flex-1 truncate font-['Open_Sans',sans-serif] text-[9px]">{title}</h2>
      {['min', 'max', 'close'].map((b) => (
        <button
          key={b}
          type="button"
          aria-label={b}
          className={
            active && b === 'close'
              ? 'flex h-[14px] w-[23px] items-center justify-center rounded-sm border border-[#633] bg-gradient-to-b from-[#e09080] to-[#c03820]'
              : 'flex h-[14px] w-[23px] items-center justify-center rounded-sm border border-[#8ea3bd]'
          }
        >
          <svg width="10" height="10" viewBox="0 0 10 10" fill="none">
            {b === 'min' && <rect x="1" y="5" width="8" height="3" rx="1" fill="#fff" stroke="#555" />}
            {b === 'max' && <><rect x="1.500" y="1.500" width="7" height="7" fill="#fff" stroke="#555" /><rect x="4" y="4" width="2" height="2" fill="#555" /></>}
            {b === 'close' && <><path d="M2 2l6 6M8 2L2 8" stroke="#555" strokeWidth="3.500" /><path d="M2 2l6 6M8 2L2 8" stroke="#fff" strokeWidth="1.800" /></>}
          </svg>
        </button>
      ))}
    </header>
    <div className="flex min-h-0 flex-1 border border-[#889] bg-[#f0f0f0]">
      <svg width="139" height="146" className="block shrink-0 overflow-visible">
        <Chevrons x={6} y={131} />
        {children}
      </svg>
      <div className="flex flex-1 justify-end border-r-2 border-white pt-1">
        <svg width="5" height="18" viewBox="0 0 5 18"><path d="M5 0v8L0 4zM0 10v8l5-4z" /></svg>
      </div>
    </div>
  </section>
);

const GateTools = () => (
  <div className="flex h-[29px] shrink-0 border-t-2 border-[#777] bg-[#f0f0f0]">
    {GATE_TOOLS.map(([label, art]) => (
      <button key={label} type="button" aria-label={label} className="flex flex-1 items-center justify-center border-2 border-[#999] border-l-[#fff] border-t-[#fff] bg-[#e1e1e1] outline outline-1 -outline-offset-4 outline-[#b4b4b4]">
        <Ico>{art}</Ico>
      </button>
    ))}
  </div>
);

const headCell = 'border-r border-[#ddd] px-1 text-left font-normal';

const FilesTable = () => (
  <table className="h-full w-full table-fixed border-collapse bg-white leading-[12px]">
    <colgroup>
      <col className="w-[23px]" />
      <col className="w-[88px]" />
      <col className="w-[54px]" />
      <col />
    </colgroup>
    <thead>
      <tr className="h-[21px]">
        {['I', 'Files', 'Events', '%Parent'].map((h) => (
          <th key={h} className={headCell}>{h}</th>
        ))}
      </tr>
    </thead>
    <tbody>
      {FILES.map((f) => {
        const rows = [
          [f.n, f.name, f.total, '', true],
          ['', 'R1', f.r1, f.pct, true],
          ['C', 'R1', f.r1, f.pct],
          ['', 'Signal (+ve)', f.sig[0], f.sig[1]],
          ['', 'Noise (-ve)', f.noise[0], f.noise[1]],
        ];
        return rows.map(([i, name, events, pct, green], k) => (
          <tr key={`${f.name}-${k}`}>
            <td className={green ? 'border border-[#bbb] bg-[#00ff00] p-0 font-bold' : 'border border-[#ccc] p-0'}>{i}</td>
            <td className={[
              'border border-[#bbb] bg-[#00ff00] p-0 font-bold',
              'border border-[#bbb] bg-[#00ff00] p-0 pl-2',
              'border border-[#ccc] p-0 pl-2',
              'border border-[#ccc] p-0 pl-4',
              'border border-[#ccc] p-0 pl-4',
            ][k]}>{name}</td>
            <td className="border border-[#ccc] p-0">{events}</td>
            <td className="border border-[#ccc] p-0">{pct}</td>
          </tr>
        ));
      })}
    </tbody>
  </table>
);

const GatePanel = () => (
  <aside className="flex w-[213px] shrink-0 flex-col pl-[2px]">
    <div className="flex h-[23px] shrink-0 items-center border-b border-l-2 border-t border-[#999] px-1">
      <Slider label="Plot size" value={5} />
    </div>
    <div className="flex h-[56px] shrink-0 border-l-2 border-[#999] pt-[2px]">
      <div className="flex w-[24px] flex-col gap-2 pl-px">
        {['up', 'down'].map((d) => (
          <button key={d} type="button" aria-label={`Jump ${d}`} className="flex size-[15px] items-center justify-center border border-[#999] bg-[#d8d8d8]">
            <svg viewBox="0 0 10 10" className="size-[13px]" fill="none"><path d={ARROWS[d]} stroke="#555" strokeWidth="2.500" /></svg>
          </button>
        ))}
      </div>
      <div className="flex w-[34px] flex-col gap-[9px] pt-[2px]">
        <label htmlFor="jump">Jump</label>
        <input id="jump" defaultValue="1" className="h-[18px] w-[25px] border border-[#999] bg-white px-[2px]" />
      </div>
      <div className="flex flex-col gap-[3px]">
        <CheckBox label="Batch" />
        <CheckBox label="Default Plots" />
        <CheckBox label="Jump on Click" />
      </div>
      <div className="ml-1">
        <CheckBox label="Show Gates" checked />
      </div>
    </div>
    <SplitH />
    <div className="h-[57px] shrink-0 border-2 border-r border-[#888] bg-[#f0f0f0]">
      <table className="w-full table-fixed border-collapse bg-white leading-[11px]">
        <colgroup>
          <col className="w-[119px]" />
          <col className="w-[47px]" />
          <col />
        </colgroup>
        <thead>
          <tr className="h-[21px]">
            {['Project', 'Files', 'Resize'].map((h) => (
              <th key={h} className={headCell}>{h}</th>
            ))}
          </tr>
        </thead>
        <tbody>
          <tr className="h-[13px]">
            <td className="border-r border-[#ddd] p-0">Project 1</td>
            <td className="border-r border-[#ddd] p-0">8</td>
            <td className="p-0"><div className="flex justify-center"><CheckBox label="Resize Project 1" hideLabel /></div></td>
          </tr>
          <tr className="h-[13px] bg-[#0078d7] text-white">
            <td className="border-r border-[#ddd] p-0 pl-2">Experiment 1</td>
            <td className="border-r border-[#ddd] p-0">8</td>
            <td className="p-0"><div className="flex justify-center"><CheckBox label="Resize Experiment 1" hideLabel checked /></div></td>
          </tr>
        </tbody>
      </table>
    </div>
    <SplitH />
    <div className="flex min-h-0 flex-1 flex-col border border-l-2 border-t-2 border-[#888]">
      <div className="min-h-0 flex-1">
        <FilesTable />
      </div>
      <HScroll before={2} size={45} after={130} />
    </div>
    <SplitH />
    <div className="flex h-[60px] shrink-0 flex-col border border-l-2 border-t-2 border-[#888]">
      <div className="flex min-h-0 flex-1 overflow-hidden">
        <table className="w-full table-fixed border-collapse self-start bg-white leading-[11px]">
          <colgroup>
            <col className="w-[90px]" />
            <col className="w-[54px]" />
            <col />
          </colgroup>
          <thead>
            <tr className="h-[18px]">
              {['Overlays', 'ParX', 'ParY'].map((h) => (
                <th key={h} className={headCell}>{h}</th>
              ))}
            </tr>
          </thead>
          <tbody>
            {[['FSC-A', 'CD4-PerC...'], ['CD4-PerC...', 'FSC-A']].map(([x, y]) => (
              <tr key={x} className="h-[13px]">
                <td className="whitespace-nowrap border border-[#ddd] p-0">CD4 PerCP-Cy5.5</td>
                <td className="whitespace-nowrap border border-[#ddd] p-0">{x}</td>
                <td className="whitespace-nowrap border border-[#ddd] p-0">{y}</td>
              </tr>
            ))}
          </tbody>
        </table>
        <div className="mt-[19px] flex shrink-0 flex-col bg-[#f0f0f0]">
          <Arrow dir="up" />
          <Arrow dir="down" />
        </div>
      </div>
      <div className="pr-[13px]">
        <HScroll before={1} size={84} after={80} />
      </div>
    </div>
  </aside>
);

const sigma = <path d="M16 5V3H4l6 7-6 7h12v-2" stroke="#6a94c8" strokeWidth="2.500" />;

const LOGIC_TABS = [
  ['ClusterLogic', 'w-[73px]', <><circle cx="7" cy="6" r="3.500" fill="#f0c020" /><circle cx="13" cy="6" r="3.500" fill="#e06020" /><circle cx="5" cy="11" r="3.500" fill="#a030d0" /><circle cx="15" cy="11" r="3.500" fill="#20a0e0" /><circle cx="10" cy="15" r="3.500" fill="#e030a0" /></>],
  ['QCLogic', 'w-[71px]', <><circle cx="10" cy="10" r="9" fill="#18a428" /><path d="M5 10l4 4 7-8" stroke="#fff" strokeWidth="3" /></>],
  ['PlateLogic', 'w-[70px]', <><path d="M1 1h5v5H1zM8 1h5v5H8zM1 8h5v5H1z" fill="#e08878" /><path d="M15 1h4v5h-4zM8 8h5v5H8zM1 15h5v4H1z" fill="#c04848" /><path d="M15 8h4v5h-4zM8 15h5v4H8zM15 15h4v4h-4z" fill="#6888c0" /></>],
  ['Set Statistics', 'w-[83px]', <><path d="M12 4V3H1l5 7-5 7h11v-2" stroke="#6a94c8" strokeWidth="2.500" /><path d="M17 6v7M13 9.500h7" stroke="#f03020" strokeWidth="2.500" /></>],
  ['View Statistics', 'w-[87px]', sigma],
  ['Parameters', 'w-[71px]', <><circle cx="10" cy="10" r="9" fill="#6c9cd4" stroke="#3c6ca8" /><path d="M8 15V5h3a2.500 2.500 0 010 5H8" stroke="#fff" strokeWidth="2" /></>],
  ['CompLogic', 'w-[87px]', <><path d="M9 8h10v11H9zM9 12h10M9 15h10M12 8v11M16 8v11" stroke="#b0b8c8" /><path d="M1 7l8-5 3 7-7 5z" fill="#7ab4e8" stroke="#2a5080" strokeWidth="1.500" /></>],
];

const GateLogicWindow = () => (
  <div className="absolute bottom-[437px] left-0 right-[796px] top-0 flex flex-col overflow-hidden border-b border-r-2 border-b-[#333] border-r-[#b0b0b0] bg-[#f0f0f0]">
    <WindowChrome active="GateLogic">
      <div className="mr-[7px] flex min-h-0 flex-1 border-t border-white">
        <GatePanel />
        <SplitV className="w-[10px]" />
        <div className="flex min-w-0 flex-1 flex-col border-l-2 border-[#888]">
          <GateTools />
          <div className="flex h-[344px] shrink-0 border-y border-[#222]">
            <div className="min-w-0 flex-1 overflow-hidden border-r border-[#222] bg-white pl-px">
              <div className="flex gap-px">
                <MiniWindow title="001.fcs" active><ScatterPlot /></MiniWindow>
                <MiniWindow title="R1 [001.fcs]"><GatedPlot /></MiniWindow>
                {['001', '002', '003', '004'].map((id) => (
                  <MiniWindow key={id} title={`[C]R1 [${id}.f...`}><HistogramPlot id={id} /></MiniWindow>
                ))}
              </div>
              <div className="mt-px flex gap-px">
                {['006', '007', '008'].map((id) => (
                  <MiniWindow key={id} title={`[C]R1 [${id}.f...`}><HistogramPlot id={id} /></MiniWindow>
                ))}
                <MiniWindow title="CD4 PerCP-..."><SmallTitration /></MiniWindow>
                <MiniWindow title="CD4 PerCP-..."><SmallStack /></MiniWindow>
              </div>
            </div>
            <VScroll before={1} size={285} after={32} />
          </div>
          <SplitH />
          <div className="flex h-[27px] shrink-0 items-end border-t border-[#999] pb-px pl-px" role="tablist">
            {LOGIC_TABS.map(([label, width, art]) => (
              <button
                key={label}
                type="button"
                role="tab"
                aria-selected={label === 'PlateLogic'}
                className={`${width} ${label === 'PlateLogic' ? 'h-[25px] bg-white pb-[3px]' : 'h-[24px]'} flex shrink-0 items-center justify-center gap-1 whitespace-nowrap border border-b-0 border-[#d9d9d9]`}
              >
                <Ico className="size-[14px] shrink-0">{art}</Ico>
                {label}
              </button>
            ))}
            <button type="button" role="tab" aria-selected="false" className="h-[24px] border border-b-0 border-[#d9d9d9] px-1 font-bold text-[#2a4a90]">FCS</button>
          </div>
          <div className="flex min-h-0 flex-1 border-t-[3px] border-[#888]">
            <div className="flex w-[83px] shrink-0 flex-col px-px">
              <div className="min-h-0 flex-1 border border-t-2 border-[#888]">
                <div className="flex h-[21px] items-center bg-white pl-[3px]">Plate</div>
                <div className="mt-px flex h-[12px] items-center bg-white pl-px">Experiment 1</div>
              </div>
              <div className="flex h-[24px] shrink-0 items-center px-1">
                <Slider label="Plate size" value={86} />
              </div>
            </div>
            <SplitV className="w-[7px]" />
            <section className="mb-[6px] flex min-w-0 flex-1 flex-col border-2 border-[#555] border-b-[#2ab0d0] bg-gradient-to-b from-[#9bb8d8] to-[#b8d0ea] pl-[6px]">
              <header className="flex h-[20px] shrink-0 items-center gap-1">
                <Logo />
                <h2 className="font-['Open_Sans',sans-serif] text-[10px]">Experiment 1</h2>
              </header>
              <div className="min-h-0 flex-1 overflow-hidden border-l border-t border-[#567] bg-[#f0f0f0]">
                <PlateGrid />
              </div>
            </section>
          </div>
        </div>
      </div>
      <footer className="h-[20px] shrink-0 border-t-2 border-white" />
    </WindowChrome>
  </div>
);

// ---------------------------------------------------------------- DocLogic window

const Folder = () => (
  <svg width="11" height="13" viewBox="0 0 11 13" className="shrink-0">
    <path d="M0 0h8v2h2v11H0z" fill="#ffe08a" />
    <path d="M8 9h3v4H8z" fill="#f5c85a" />
    <path d="M0 .5h8" stroke="#f0cc60" />
  </svg>
);

const TreeRow = ({ level, label, box }) => (
  <li className="flex h-[13px] items-center whitespace-nowrap">
    <span className={['w-px shrink-0', 'w-[4px] shrink-0', 'w-[20px] shrink-0', 'w-[40px] shrink-0'][level]} />
    {box && (
      <svg width="13" height="9" className="mr-[2px] shrink-0" fill="none">
        <rect x=".5" y="1.500" width="7" height="7" fill="#fff" stroke="#999" />
        <path d={box === '+' ? 'M2 5h4M4 3v4' : 'M2 5h4'} stroke="#246" />
        <path d="M9 5h4" stroke="#999" strokeDasharray="1 1" />
      </svg>
    )}
    {level < 3 ? (
      <Folder />
    ) : (
      <svg width="19" height="13" className="shrink-0" fill="none">
        <path d="M.5 0v13M1 6.500h6" stroke="#999" strokeDasharray="1 1" />
        <circle cx="14" cy="6.500" r="3.500" fill="#666" />
      </svg>
    )}
    <span className="pl-1">{label}</span>
  </li>
);

const DOC_TABS = [
  ['Plots', <><path d="M2 1v18h17" stroke="#111" strokeWidth="1.500" /><g transform="rotate(30 10 10)"><ellipse cx="10" cy="9" rx="6.500" ry="8.500" fill="#2a40e0" /><ellipse cx="10" cy="10" rx="5.200" ry="7" fill="#18b8e0" /><ellipse cx="10" cy="10.500" rx="4.200" ry="5.500" fill="#30d030" /><ellipse cx="10" cy="11" rx="3" ry="4" fill="#f0e020" /><ellipse cx="10" cy="11.500" rx="1.800" ry="2.400" fill="#f02010" /></g></>],
  ['Plates', <><path d="M0 0h6v6H0z" fill="#1818c8" /><path d="M7 0h6v6H7zM0 7h6v6H0z" fill="#4040b0" /><path d="M14 0h6v6h-6zM7 7h6v6H7zM0 14h6v6H0z" fill="#8a3c90" /><path d="M14 7h6v6h-6zM7 14h6v6H7z" fill="#b83060" /><path d="M14 14h6v6h-6z" fill="#e01020" /></>],
  ['Graphs', <><path d="M1 0v19h18" stroke="#444" /><path d="M3 13h3v4H3zM9 8h3v9H9zM15 1h3v16h-3z" fill="#1c4cf0" /></>],
  ['Beads', <><path d="M2 7v11M2 13a3 3 0 016 0v2a3 3 0 01-6 0z" stroke="#111" strokeWidth="2.500" />{[0, 1, 2, 3, 4].map((i) => [0, 1, 2, 3, 4].map((j) => j <= i + 1 && <circle key={`${i}${j}`} cx={4 + i * 3.6} cy={2 + j * 3.6} r="1.400" fill={j > 2 ? '#f0a020' : '#1c88c0'} />))}</>],
];

const DocTree = () => (
  <aside className="flex w-[206px] shrink-0 flex-col border-l border-[#999] pb-[3px] pl-[2px] pr-[2px]">
    <div className="flex h-[33px] shrink-0 items-end" role="tablist">
      {DOC_TABS.map(([label, art]) => (
        <button
          key={label}
          type="button"
          role="tab"
          aria-label={label}
          aria-selected={label === 'Graphs'}
          className={
            label === 'Graphs'
              ? 'flex h-[32px] w-[39px] items-center justify-center border border-b-0 border-[#ddd] bg-white'
              : 'flex h-[30px] w-[38px] items-center justify-center border border-b-0 border-[#ddd]'
          }
        >
          <Ico className="size-[26px]">{art}</Ico>
        </button>
      ))}
    </div>
    <div className="mt-[2px] flex min-h-0 flex-1 flex-col overflow-hidden border border-[#828790] bg-white">
      <ul className="min-h-0 flex-1 pt-px">
        {TREE.map((row, i) => (
          <TreeRow key={i} {...row} />
        ))}
      </ul>
      <HScroll before={1} size={163} after={14} />
    </div>
  </aside>
);

const ToolRow = ({ groups, children }) => (
  <div className="flex h-[24px]">
    {groups.map((group, i) => (
      <div key={i} className="mr-[17px] flex gap-[2px]">
        {group.map(([label, art]) => (
          <Push key={label} className="size-[23px]" aria-label={label}>
            <Ico className="size-[14px] bg-[#f4f4f4]">{art}</Ico>
          </Push>
        ))}
      </div>
    ))}
    {children}
  </div>
);

const NumberSelect = ({ id }) => (
  <div className="relative">
    <select id={id} className="h-[17px] w-[74px] appearance-none border border-[#adadad] bg-[#e1e1e1] px-1">
      <option>1</option>
      <option>2</option>
      <option>3</option>
    </select>
    <svg width="8" height="6" className="pointer-events-none absolute right-[3px] top-[6px]" fill="none">
      <path d="M1 1l3 3 3-3" stroke="#444" />
    </svg>
  </div>
);

const DocToolbar = () => (
  <div className="flex h-[75px] shrink-0 border border-l-2 border-t-2 border-[#888] pl-px pt-px">
    <div className="w-[444px] shrink-0">
      <ToolRow groups={DOC_TOOLS}>
        <Push className="ml-[1px] size-[23px]" aria-label="Remove">
          <Ico className="size-[14px] bg-white">{cross}</Ico>
        </Push>
      </ToolRow>
      <ToolRow groups={DOC_TOOLS_LOWER} />
    </div>
    <div className="ml-[17px] flex w-[82px] shrink-0 flex-col gap-[3px] pt-[3px]">
      <span>Plot Stat Table</span>
      <div className="pl-[2px]"><CheckBox label="On insert" /></div>
      <Push className="h-[18px] w-[48px]">Add</Push>
    </div>
    <div className="flex w-[82px] shrink-0 flex-col gap-[3px] pt-[3px]">
      <span>Grid</span>
      <div className="pl-[2px]"><CheckBox label="On insert" /></div>
      <div className="pl-[2px] pt-[3px]"><CheckBox label="1 tube/page" /></div>
    </div>
    <div className="grid w-[124px] shrink-0 grid-cols-[50px_74px] content-start items-center pt-[15px]">
      <label htmlFor="grid-h">Horizontal:</label>
      <NumberSelect id="grid-h" />
      <label htmlFor="grid-v">Vertical:</label>
      <NumberSelect id="grid-v" />
    </div>
    <div className="flex w-[100px] flex-col gap-[6px] pl-[10px] pt-[16px]">
      <CheckBox label="Zoom to fit" />
      <Push className="h-[17px] w-[48px]">Apply</Push>
    </div>
    <Push className="h-[17px] w-[130px]">BeadLogic document</Push>
  </div>
);

const Figure = ({ className, children }) => <figure className={`absolute ${className}`}>{children}</figure>;

const DocPage = () => (
  <div className="relative my-[9px] ml-[48px] mr-[26px] min-h-0 flex-1 overflow-hidden bg-white">
    <Figure className="left-0 top-0"><DocTitration /></Figure>
    <Figure className="left-[550px] top-0"><DocStack /></Figure>
    <Figure className="left-0 top-[330px]">
      <LineChart
        w={360}
        title="CD4 PerCP-Cy5.5 MFI"
        titleX={172}
        titleY={10}
        yLabel="Median FI"
        labelY={119}
        axisX={88}
        top={61}
        shift={40}
        ticks={[6000, 4000, 2000, 0]}
        legend={[[294, 16, '#ff0000', 'Signal(+ve)'], [294, 28, '#0000ff', 'Noise(-ve)']]}
        series={[
          { color: '#ff1010', values: [5270, 5170, 4280, 3090, 1670, 980, 410, 260] },
          { color: '#0000ff', values: [150, 90, 90, 80, 80, 80, 90, 90] },
        ]}
      />
    </Figure>
    <Figure className="left-[364px] top-[334px]">
      <LineChart
        w={360}
        title="CD4 PerCP-Cy5.5 Stain index"
        titleX={187}
        titleY={10}
        yLabel="Stain index"
        labelY={116}
        axisX={88}
        top={61}
        shift={42}
        ticks={[60, 40, 20, 0]}
        legend={[[268, 35, '#ff0000', 'CD4 PerCP-Cy5.5']]}
        series={[{ color: '#ff1010', values: [25, 37, 35, 30, 18, 10, 4, 2] }]}
      />
    </Figure>
    <Figure className="left-[740px] top-[326px]">
      <LineChart
        w={360}
        title="CD4 PerCP-Cy5.5 Signal/Noise Ratio"
        titleX={200}
        titleY={10}
        yLabel="Signal/Noise Ratio"
        labelY={103}
        axisX={88}
        top={61}
        shift={40}
        ticks={[90, 60, 30, 0]}
        legend={[[268, 35, '#ff0000', 'CD4 PerCP-Cy5.5']]}
        series={[{ color: '#ff1010', values: [39, 64, 58, 45, 24, 14, 6, 3] }]}
      />
    </Figure>
  </div>
);

const ThumbPlots = ({ tone }) => (
  <svg width="118" height="80" className="block">
    {[0, 1, 2, 3].map((r) => (
      <g key={r} transform={`translate(0 ${r * 16})`}>
        <path d="M1 2h8M25 2h7M49 2h9" stroke="#333" strokeDasharray="2 1" />
        <rect x="1.500" y="4.500" width="7" height="9" fill="#fff" stroke="#000" />
        <path d="M2 12l6-2v3H2z" fill="#3050f0" />
        <rect x="27.500" y="4.500" width="6" height="9" fill="#fff" stroke="#000" />
        <path d="M28 8h3v4h-3z" fill={tone} />
        <rect x="52" y="4" width="7" height="10" fill="#111" />
        <path d="M56 5v8" stroke="#ccc" />
      </g>
    ))}
    <path d="M1 1h6" stroke="#000" strokeWidth="2" />
    <path d="M71 68.500h11" stroke="#333" strokeDasharray="3 1" />
  </svg>
);

const ThumbPlate = () => (
  <svg width="118" height="80" className="block">
    {Array.from({ length: 8 }, (_, i) => {
      const x = 5.5 + i * 8.4;
      return (
        <g key={i}>
          <path d={`M${x + 1} 24l6-5v5z`} fill="#5060f0" />
          <path d={`M${x + 1} 33h2v7h-2zM${x + 5} 33h2v7h-2z`} fill="#20a0f0" />
          <path d={`M${x + 3} 34h1v5h-1z`} fill="#30d040" />
          <path d={`M${x + 1} 59l1-14 2 14M${x + 5} 59l1-15 1 15`} stroke="#111" strokeWidth="1.500" fill="none" />
          <path d={`M${x} 10v50`} stroke="#000" />
        </g>
      );
    })}
    <path d="M5 10.500h68v50H5zM72 10v50" fill="none" stroke="#a050a0" strokeWidth="1.500" />
    <path d="M5 26.500h67M5 43.500h67" stroke="#000" />
  </svg>
);

const ThumbDoc = () => (
  <svg width="118" height="80" className="block">
    <rect x="2.500" y="5.500" width="16" height="23" fill="#fff" stroke="#000" />
    <path d="M3 13q8 1 15 9v4H3z" fill="#111" />
    <path d="M4 3.500h10M38 3.500h5" stroke="#444" strokeDasharray="2 1" />
    <rect x="39.500" y="5.500" width="16" height="23" fill="#fff" stroke="#000" />
    <path d="M40 9.500h15M40 12.500h15M40 15.500h15M40 18.500h15M40 21.500h15M40 24.500h15" stroke="#333" />
    <path d="M50 8l-5 17" stroke="#2a6" strokeDasharray="2 1" />
    {[0, 1, 2].map((i) => (
      <g key={i} transform={`translate(${4 + i * 25} 36)`}>
        <path d="M2 1h12M2 20h12M1 6v12" stroke="#bbb" strokeDasharray="1 2" />
        <path d="M4 7q5 2 9 10" fill="none" stroke="#f88" strokeDasharray="2 1" />
      </g>
    ))}
    <path d="M71 66.500h11" stroke="#333" strokeDasharray="3 1" />
  </svg>
);

const SideTools = ({ count }) => (
  <div className="flex h-[28px] shrink-0 gap-[3px] overflow-hidden pl-px pt-[2px]">
    {SIDE_TOOLS.slice(0, count).map(([label, art]) => (
      <Push key={label} className="h-[22px] w-[22px] shrink-0" aria-label={label}>
        <Ico className="size-[15px] bg-white">{art}</Ico>
      </Push>
    ))}
  </div>
);

const PAGES = [<ThumbPlots tone="#20b0c0" />, <ThumbPlots tone="#3060f0" />, <ThumbPlate />, <ThumbDoc />, null];

const DocSidebar = () => (
  <aside className="flex w-[147px] shrink-0 flex-col">
    <div className="flex h-[133px] shrink-0 flex-col border-l-2 border-t-2 border-[#777]">
      <SideTools count={6} />
      <div className="min-h-0 flex-1 border border-[#828790]">
        <table className="w-full table-fixed border-collapse bg-white leading-[12px]">
          <colgroup>
            <col className="w-[25px]" />
            <col />
          </colgroup>
          <thead>
            <tr className="h-[21px]"><th className={headCell}>0-0</th><th className={headCell}>DocLogic</th></tr>
          </thead>
          <tbody>
            <tr className="h-[13px]"><td className="border-r border-[#999] p-0 pl-px">1</td><td className="p-0 pl-px">DocLogic</td></tr>
            <tr className="h-[13px] bg-[#0078d7] text-white"><td className="border-r border-[#999] p-0 pl-px">2</td><td className="p-0 pl-px">Titration</td></tr>
          </tbody>
        </table>
      </div>
    </div>
    <SplitH />
    <div className="flex min-h-0 flex-1 flex-col border-l-2 border-t border-[#777]">
      <SideTools count={5} />
      <div className="min-h-0 flex-1 border border-[#828790]">
        <table className="w-full table-fixed border-collapse bg-white">
          <colgroup>
            <col className="w-[25px]" />
            <col />
          </colgroup>
          <thead>
            <tr className="h-[21px]"><th className={headCell}>0-0</th><th className={headCell}>Page</th></tr>
          </thead>
          <tbody>
            {PAGES.map((thumb, i) => (
              <tr key={i} className="h-[82px]">
                <td className={i === 3 ? 'border border-[#333] bg-[#0078d7] p-0 pl-px text-white' : 'border border-[#333] p-0 pl-px'}>{i + 1}</td>
                <td className="border border-[#333] p-0 align-top">{thumb}</td>
              </tr>
            ))}
          </tbody>
        </table>
      </div>
    </div>
  </aside>
);

const DocLogicWindow = () => (
  <div className="absolute bottom-0 left-[789px] right-0 top-[437px] flex flex-col overflow-hidden border-l border-r-2 border-l-[#ddd] border-r-[#aaa] bg-[#f0f0f0]">
    <WindowChrome active="DocLogic">
      <div className="mr-[5px] flex min-h-0 flex-1 border-t border-[#777]">
        <DocTree />
        <div className="ml-[7px] flex min-w-0 flex-1 flex-col border-l border-[#999]">
          <div className="flex h-[25px] shrink-0 items-center border-t border-white pl-[12px]">
            <div className="w-[89px]"><CheckBox label="Show Gates" checked /></div>
            <Push className="h-[18px] w-[130px]">Highlight Level</Push>
            <Push className="mb-1 ml-[10px] h-[19px] w-[23px]" aria-label="Layers">
              <Ico className="size-[14px] bg-white"><rect x="6" y="3" width="12" height="9" rx="2" stroke="#444" strokeWidth="1.500" /><path d="M6 6H3v11h11v-4" stroke="#888" strokeWidth="1.500" /></Ico>
            </Push>
          </div>
          <div className="flex min-h-0 flex-1">
            <div className="flex min-w-0 flex-1 flex-col">
              <DocToolbar />
              <SplitH />
              <div className="flex min-h-0 flex-1 flex-col border border-l-2 border-t-2 border-[#777]">
                <div className="flex min-h-0 flex-1">
                  <DocPage />
                  <VScroll before={182} size={254} after={182} />
                </div>
                <div className="pr-[13px]">
                  <HScroll before={328} size={496} after={338} />
                </div>
              </div>
            </div>
            <SplitV className="w-[9px]" />
            <DocSidebar />
          </div>
          <div className="flex h-[20px] shrink-0 items-center justify-end">
            <input aria-label="Zoom" defaultValue="100" className="mr-[17px] h-[16px] w-[38px] border border-[#7a7a7a] bg-white px-[2px]" />
            <Push className="mr-[10px] h-[16px] w-[28px]">-</Push>
            <div className="mr-[10px] w-[157px]"><Slider label="Zoom level" value={9} /></div>
            <Push className="mr-[2px] h-[16px] w-[28px]">+</Push>
          </div>
        </div>
      </div>
      <footer className="flex h-[15px] shrink-0 items-center justify-end border-t border-[#d0d0d0] pr-2">
        564.3 Mb / 62.50 Gb[0]
      </footer>
    </WindowChrome>
  </div>
);

const App = () => (
  <main className="relative h-screen w-full overflow-hidden bg-white font-['Liberation_Sans',Arial,sans-serif] text-[9px] leading-[12px] text-[#111]">
    <GateLogicWindow />
    <DocLogicWindow />
  </main>
);

export default App;
